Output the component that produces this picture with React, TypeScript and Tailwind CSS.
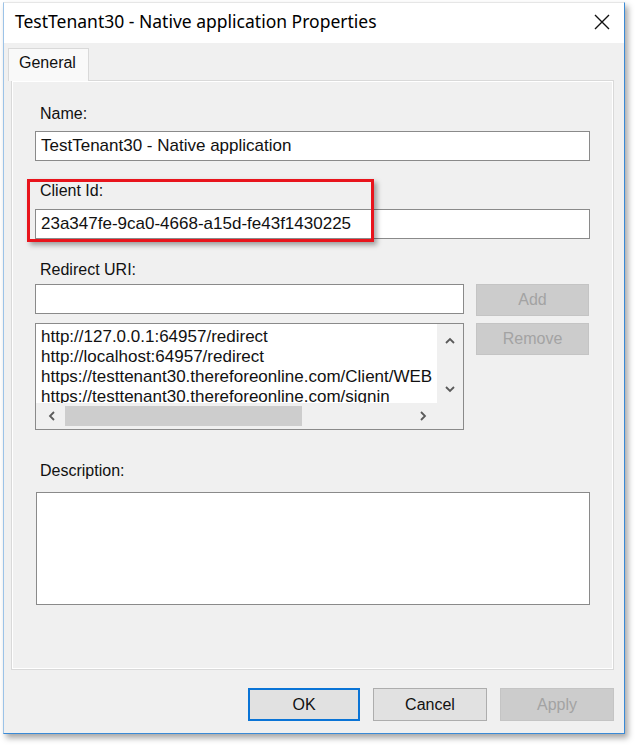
import React from 'react'

const arial = { fontFamily: '"Liberation Sans", Arial, sans-serif' }

function Chevron({ dir }: { dir: 'up' | 'down' | 'left' | 'right' }) {
  const pts = {
    up: '2,8 6,4 10,8',
    down: '2,4 6,8 10,4',
    left: '8,2 4,6 8,10',
    right: '4,2 8,6 4,10',
  }[dir]
  return (
    <svg width="12" height="12" viewBox="0 0 12 12" className="block">
      <polyline points={pts} fill="none" stroke="#5a5a5a" strokeWidth="1.8" />
    </svg>
  )
}

function Label({ children, className = '' }: { children: React.ReactNode; className?: string }) {
  return <div className={`text-[16px] leading-[18px] text-[#111] pl-[5px] ${className}`}>{children}</div>
}

function Btn({ children, disabled, primary, className = '' }: { children: React.ReactNode; disabled?: boolean; primary?: boolean; className?: string }) {
  return (
    <div
      className={`flex items-center justify-center text-[16px] ${
        primary
          ? 'border-2 border-[#0a74d6] bg-[#e1e1e1] text-[#111]'
          : disabled
          ? 'border border-[#c4c4c4] bg-[#cccccc] text-[#a3a3a3]'
          : 'border border-[#adadad] bg-[#e1e1e1] text-[#111]'
      } ${className}`}
    >
      {children}
    </div>
  )
}

export default function App() {
  const uris = [
    'http://127.0.0.1:64957/redirect',
    'http://localhost:64957/redirect',
    'https://testtenant30.thereforeonline.com/Client/WEB',
    'https://testtenant30.thereforeonline.com/signin',
  ]

  return (
    <div className="w-[639px] h-[749px] bg-white overflow-hidden" style={arial}>
      <div className="relative ml-[3px] mt-[2px] w-[622px] h-[732px] border border-[#3a8ad6] border-t-[#e6e6e6] border-l-[#9cc3e8] shadow-[3px_4px_6px_rgba(0,0,0,0.35)] flex flex-col">
        {/* barra de titulo */}
        <div className="h-[40px] bg-white flex items-center justify-between pl-[11px] pr-[14px] pb-[3px]">
          <span className="text-[17.5px] text-black" style={{ fontFamily: '"Noto Sans", "Open Sans", sans-serif' }}>
            TestTenant30 - Native application Properties
          </span>
          <svg width="16" height="16" viewBox="0 0 16 16">
            <path d="M1 1L15 15M15 1L1 15" stroke="#111" strokeWidth="1.4" />
          </svg>
        </div>

        {/* cuerpo */}
        <div className="flex-1 bg-[#f0f0f0] flex flex-col pt-[5px]">
          <div className="relative z-10 ml-[4px] w-[81px] h-[33px] -mb-[1px] bg-[#f9f9f9] border border-b-0 border-[#d9d9d9] text-[16px] leading-[18px] text-[#111] pl-[10px] pt-[5px]">
            General
          </div>

          <div className="ml-[7px] mr-[10px] h-[590px] border border-[#d9d9d9] shadow-[inset_1px_1px_0_#fff,inset_-1px_-1px_0_#fff] px-[23px] pt-[24px] flex flex-col">
            <Label>Name:</Label>
            <div className="mt-[8px] h-[30px] bg-white border border-[#8a8a8a] flex items-center pl-[5px] text-[17px] text-[#111]">
              TestTenant30 - Native application
            </div>

            <Label className="mt-[21px]">Client Id:</Label>
            <div className="mt-[9px] h-[30px] bg-white border border-[#8a8a8a] flex items-center pl-[5px] text-[17px] text-[#111]">
              23a347fe-9ca0-4668-a15d-fe43f1430225
            </div>

            <Label className="mt-[22px]">Redirect URI:</Label>
            <div className="mt-[5px] flex gap-[12px]">
              <div className="flex flex-col gap-[9px] w-[429px]">
                <div className="h-[30px] bg-white border border-[#8a8a8a]" />
                <div className="h-[107px] border border-[#8a8a8a] bg-[#f0f0f0] grid grid-cols-[1fr_26px] grid-rows-[1fr_26px]">
                  <div className="bg-white overflow-hidden pl-[5px] pt-[3px] text-[17px] leading-[20px] text-[#111] whitespace-nowrap">
                    {uris.map(u => (
                      <div key={u}>{u}</div>
                    ))}
                  </div>
                  <div className="flex flex-col items-center justify-between pt-[11px] pb-[8px]">
                    <Chevron dir="up" />
                    <Chevron dir="down" />
                  </div>
                  <div className="flex items-center pl-[10px] pr-[8px]">
                    <Chevron dir="left" />
                    <div className="ml-[7px] w-[237px] h-[20px] bg-[#cdcdcd]" />
                    <div className="flex-1" />
                    <Chevron dir="right" />
                  </div>
                  <div />
                </div>
              </div>
              <div className="flex flex-col gap-[7px]">
                <Btn disabled className="w-[113px] h-[32px]">Add</Btn>
                <Btn disabled className="w-[113px] h-[32px]">Remove</Btn>
              </div>
            </div>

            <Label className="mt-[32px]">Description:</Label>
            <div className="mt-[12px] h-[113px] ml-[1px] bg-white border border-[#8a8a8a]" />
          </div>

          <div className="mt-[18px] mr-[10px] flex justify-end gap-[13px]">
            <Btn primary className="w-[112px] h-[33px]">OK</Btn>
            <Btn className="w-[114px] h-[33px]">Cancel</Btn>
            <Btn disabled className="w-[114px] h-[33px]">Apply</Btn>
          </div>
        </div>

        {/* marco rojo de resaltado */}
        <div className="absolute left-[23px] top-[176px] w-[347px] h-[63px] border-[3px] border-[#e8141c] shadow-[3px_3px_5px_rgba(0,0,0,0.35)]" />
      </div>
    </div>
  )
}
